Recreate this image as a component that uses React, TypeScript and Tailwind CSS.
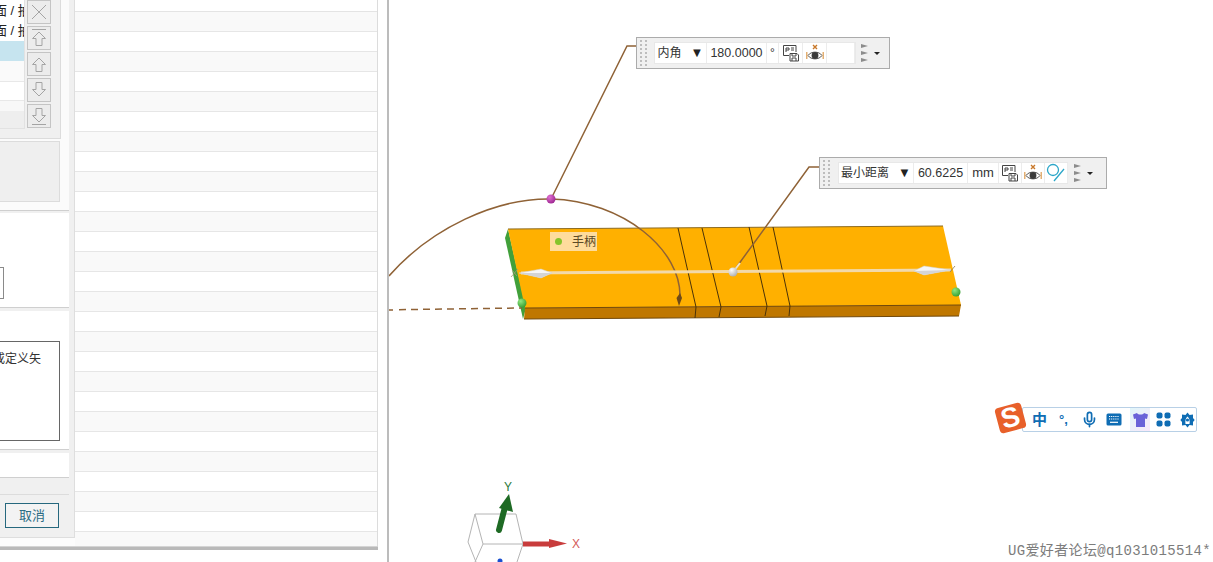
import { Mic } from "lucide-react";

const rows = Array.from({ length: 27 }, (_, i) => i);

function ArrowButton({ dir, bar }: { dir: "up" | "down"; bar?: boolean }) {
  return (
    <button className="w-[24px] h-[24px] border border-[#c4c4c4] bg-[#ececec] flex items-center justify-center">
      <svg width="18" height="20" viewBox="0 0 18 20" fill="none" stroke="#a4a4a4" strokeWidth="1">
        {dir === "up" ? (
          <>
            {bar && <path d="M2 1.5H16" />}
            <path d="M9 4L15.5 10.5H12V17.5H6V10.5H2.5Z" />
          </>
        ) : (
          <>
            <path d="M6 2.5H12V9.5H15.5L9 16L2.5 9.5H6Z" />
            {bar && <path d="M2 18.5H16" />}
          </>
        )}
      </svg>
    </button>
  );
}

function Grip() {
  return (
    <div className="w-[7px] grid grid-cols-2 gap-x-[2px] gap-y-[2px] ml-[3px]">
      {Array.from({ length: 14 }, (_, i) => (
        <span key={i} className="w-[2px] h-[2px] bg-[#bdbdbd]" />
      ))}
    </div>
  );
}

function PinIcon() {
  return (
    <svg width="18" height="18" viewBox="0 0 18 18" fill="none" stroke="#444" strokeWidth="1">
      <path d="M1.5 1.5H14V8M1.5 1.5V11.5H7" />
      <path d="M4 8V4H7V6H4M9 4H12M9 6H12" />
      <path d="M8 9.5H15L16.5 11V17H8Z" />
      <path d="M10 9.5V12H14V9.5M10 17V14H14V17" />
    </svg>
  );
}

function EyeIcon() {
  return (
    <svg width="18" height="18" viewBox="0 0 18 18" fill="none">
      <path d="M7 1L11 5M11 1L7 5" stroke="#c8782a" strokeWidth="1.4" />
      <path d="M2 11.5C5 7 13 7 16 11.5C13 16 5 16 2 11.5Z" stroke="#555" strokeWidth="1" />
      <circle cx="9" cy="11.5" r="3.4" fill="#3a3a3a" />
      <path d="M0.8 8V15M17.2 8V15" stroke="#dc9c50" strokeWidth="1.2" />
    </svg>
  );
}

function CircleSlashIcon() {
  return (
    <svg width="20" height="20" viewBox="0 0 20 20" fill="none" stroke="#2ba6c8" strokeWidth="1.3">
      <circle cx="7" cy="7" r="5.5" />
      <path d="M18 6L8 18" />
    </svg>
  );
}

function MoreArrows() {
  return (
    <div className="flex items-center gap-[5px]">
      <svg width="8" height="18" viewBox="0 0 8 18" fill="#8c8c8c">
        <path d="M0 0L7 2L0 4Z" />
        <path d="M0 7L7 9L0 11Z" />
        <path d="M0 14L7 16L0 18Z" />
      </svg>
      <span className="w-0 h-0 border-x-[3px] border-x-transparent border-t-[3px] border-t-[#222]" />
    </div>
  );
}

function Cell({ w, children }: { w: string; children?: React.ReactNode }) {
  return (
    <div className={`${w} h-full shrink-0 border-r border-[#ececec] flex items-center justify-center text-[12px] text-[#333] whitespace-nowrap`}>
      {children}
    </div>
  );
}

function ShirtIcon() {
  return (
    <svg width="17" height="16" viewBox="0 0 17 16">
      <path d="M5 1L1 2.5L2 7L4 6.5V15H13V6.5L15 7L16 2.5L12 1C11 3 6 3 5 1Z" fill="#6a62d8" />
    </svg>
  );
}

function SquaresIcon() {
  return (
    <svg width="15" height="15" viewBox="0 0 15 15" fill="#0f6db4">
      <rect x="0.5" y="0.5" width="6" height="6" rx="2" />
      <rect x="8.5" y="0.5" width="6" height="6" rx="2" />
      <rect x="0.5" y="8.5" width="6" height="6" rx="2" />
      <rect x="8.5" y="8.5" width="6" height="6" rx="2" />
    </svg>
  );
}

function KeyboardIcon() {
  return (
    <svg width="16" height="13" viewBox="0 0 16 13">
      <rect x="0.5" y="0.5" width="15" height="12" rx="1.5" fill="#0f6db4" />
      <path d="M3 3.5H13M3 6H13" stroke="#fff" strokeWidth="1.2" strokeDasharray="1.2 0.9" />
      <path d="M4 9.3H12" stroke="#fff" strokeWidth="1.2" />
    </svg>
  );
}

function GearIcon() {
  return (
    <svg width="15" height="16" viewBox="0 0 15 16">
      <path d="M7.5 0.5L9.5 3L13 2.5L13 6L14.7 8L13 10L13 13.5L9.5 13L7.5 15.5L5.5 13L2 13.5L2 10L0.3 8L2 6L2 2.5L5.5 3Z" fill="#0f6db4" />
      <path d="M7.5 4.5C5.5 6 5 9 5.5 12H9.5C10 9 9.5 6 7.5 4.5Z" fill="#fff" />
      <circle cx="7.5" cy="8" r="1.6" fill="#0f6db4" />
    </svg>
  );
}

function Model() {
  return (
    <svg className="absolute inset-0" width="825" height="562" viewBox="388 0 825 562" fill="none">
      <defs>
        <radialGradient id="ballPink" cx="0.35" cy="0.3" r="0.8">
          <stop offset="0" stopColor="#e070d0" />
          <stop offset="1" stopColor="#98208c" />
        </radialGradient>
        <radialGradient id="ballWhite" cx="0.35" cy="0.3" r="0.8">
          <stop offset="0" stopColor="#ffffff" />
          <stop offset="1" stopColor="#a8a8a8" />
        </radialGradient>
        <radialGradient id="ballGreen" cx="0.35" cy="0.3" r="0.8">
          <stop offset="0" stopColor="#90e880" />
          <stop offset="1" stopColor="#30982c" />
        </radialGradient>
      </defs>

      {/* part */}
      <path d="M507 229L504 238L522 319L525 308Z" fill="#41a03a" />
      <path d="M507 229L942 226L960 305L524 308Z" fill="#ffb000" />
      <path d="M524 308L960 305L958 316L523 319Z" fill="#bf7700" />
      <path d="M507 229L942 226" stroke="#8c6a20" strokeWidth="1" />
      <path d="M524 308L960 305M523 319L958 316" stroke="#70480a" strokeWidth="1" />
      <path d="M677 228L695 307L694 318M701 228L720 307L718 317M748 227L766 306L764 316M772 227L789 306L788 316" stroke="#4a3208" strokeWidth="1" />

      {/* angle arc and dashed reference */}
      <path d="M388 276C430 228 495 198 550 199C622 201 681 250 679 298" stroke="#8f6236" strokeWidth="1.5" />
      <path d="M388 310H392M398 309.7L521 308" stroke="#8f6236" strokeWidth="1.5" strokeDasharray="7 5" />
      <path d="M678 306L675.5 298L679 293L681 298Z" fill="#6e4a18" />

      {/* axis */}
      <path d="M520 273L950 270" stroke="#f2d9aa" strokeWidth="3" />
      <path d="M518 273L540 269L551 273L540 278Z" fill="#f6f6f6" stroke="#cfcfcf" strokeWidth="0.5" />
      <path d="M518 273L551 273L540 278Z" fill="#d4d4d4" />
      <path d="M913 271L923 266L950 270L923 275Z" fill="#f6f6f6" stroke="#cfcfcf" strokeWidth="0.5" />
      <path d="M913 271L950 270L923 275Z" fill="#d4d4d4" />
      <path d="M510 277L517 269M511 270L516 276" stroke="#a89878" strokeWidth="0.8" />
      <path d="M949 272L954 266" stroke="#8a7a50" strokeWidth="0.8" />

      {/* leaders */}
      <path d="M732 272L808 167H819" stroke="#8f6236" strokeWidth="1.5" />
      <path d="M732 272L739 263" stroke="#f2e4c8" strokeWidth="2" />
      <path d="M550 199L626 46H637" stroke="#8f6236" strokeWidth="1.5" />

      {/* handles */}
      <circle cx="550" cy="199" r="4.5" fill="url(#ballPink)" />
      <circle cx="732" cy="272" r="4.5" fill="url(#ballWhite)" />
      <circle cx="521" cy="303" r="4.5" fill="url(#ballGreen)" />
      <circle cx="955" cy="292" r="4.5" fill="url(#ballGreen)" />

      {/* triad */}
      <path d="M474 514H515L522 544H482L474 514L467 542L475 562M482 544L474 562M522 544L516 562" stroke="#b4b4b4" strokeWidth="1" />
      <path d="M498 530L504 507" stroke="#1e6a24" strokeWidth="6" strokeLinecap="round" />
      <path d="M508 494L512 512L498 508Z" fill="#1e6a24" />
      <path d="M522 544H550" stroke="#c83c3c" strokeWidth="5" />
      <path d="M566 543.5L548 539V548Z" fill="#c83c3c" />
      <circle cx="499" cy="561" r="2.5" fill="#1a50d0" />
    </svg>
  );
}

export default function App() {
  return (
    <div className="w-[1213px] h-[562px] flex overflow-hidden bg-white font-['Liberation_Sans','Noto_Sans_CJK_SC',sans-serif]">
      {/* left pane */}
      <div className="w-[389px] h-full shrink-0 border-r-2 border-[#bcbcbc] flex flex-col">
        <div className="h-[546px] w-[378px] flex shrink-0 overflow-hidden border-r border-[#dcdcdc]">
          {/* dialog */}
          <div className="w-[75px] h-full shrink-0 bg-[#fcfcfc]">
            <div className="h-[538px] bg-[#f0f0f0] border-b border-r border-[#dedede] flex flex-col">
              <div className="w-[69px] h-[211px] bg-[#fbfbfb] border-b border-[#cfcfcf] shrink-0">
                <div className="w-[61px] h-[139px] bg-[#f0f0f0] border-r border-b border-[#dcdcdc] flex gap-[2px]">
                  <div className="w-[25px] h-[129px] bg-white border-r border-b border-[#e2e2e2] flex flex-col overflow-hidden text-[13px] text-[#222]">
                    <div className="h-[21px] leading-[21px] whitespace-nowrap -ml-[6px]">面 / 抽</div>
                    <div className="h-[20px] leading-[20px] whitespace-nowrap -ml-[6px]">面 / 抽</div>
                    <div className="h-[20px] bg-[#c6e4ef]" />
                    <div className="h-[21px] bg-[#fafafa] border-b border-[#e8e8e8]" />
                    <div className="h-[20px] bg-white border-b border-[#e8e8e8]" />
                    <div className="h-[10px] bg-[#f8f8f8]" />
                    <div className="h-[17px] bg-[#eeeeee]" />
                  </div>
                  <div className="flex flex-col gap-[2px]">
                    <button className="w-[24px] h-[24px] border border-[#c4c4c4] bg-[#ececec] flex items-center justify-center">
                      <svg width="18" height="18" viewBox="0 0 18 18" stroke="#a4a4a4" strokeWidth="1">
                        <path d="M2 2L16 16M16 2L2 16" />
                      </svg>
                    </button>
                    <ArrowButton dir="up" bar />
                    <ArrowButton dir="up" />
                    <ArrowButton dir="down" />
                    <ArrowButton dir="down" bar />
                  </div>
                </div>
                <div className="w-[60px] h-[61px] mt-[2px] bg-[#efefef] border-t border-r border-b border-[#dcdcdc]" />
              </div>

              <div className="w-[69px] h-[95px] mt-[2px] bg-white border-b border-[#cfcfcf] shrink-0">
                <div className="w-[4px] h-[32px] mt-[54px] border-r border-y border-[#8a8a8a]" />
              </div>

              <div className="w-[69px] h-[139px] mt-[3px] bg-white border-b border-[#cfcfcf] shrink-0 pt-[30px]">
                <div className="w-[60px] h-[100px] border-r border-y border-[#666] overflow-hidden flex justify-end">
                  <span className="text-[12px] leading-[14px] mt-[10px] mr-[18px] text-[#333] whitespace-nowrap">或定义矢</span>
                </div>
              </div>

              <div className="w-[69px] h-[25px] mt-[3px] bg-white border-b border-[#cfcfcf] shrink-0" />

              <div className="w-[69px] mt-[16px] border-t border-[#dcdcdc] pt-[8px] pl-[5px]">
                <button className="w-[54px] h-[25px] border border-[#26687e] bg-[#f3f3f3] text-[13px] text-[#2b6c84] flex items-center justify-center">
                  取消
                </button>
              </div>
            </div>
          </div>

          {/* striped table */}
          <div className="flex-1 h-full flex flex-col">
            <div className="h-[12px] shrink-0 border-b border-[#e4e4e4]" />
            {rows.map((r) => (
              <div key={r} className={`h-[20px] shrink-0 border-b border-[#e6e6e6] ${r % 2 === 0 ? "bg-[#f9f9f9]" : "bg-white"}`} />
            ))}
          </div>
        </div>
        <div className="w-[378px] h-[4px] shrink-0 bg-[#b9b9b9] border-t border-[#d4d4d4]" />
      </div>

      {/* graphics window */}
      <div className="relative flex-1 h-full overflow-hidden">
        <Model />

        <div className="absolute left-[161px] top-[232px] w-[47px] h-[19px] bg-[#fedc9c] flex items-center text-[12px] text-[#5c4a26]">
          <span className="w-[7px] h-[7px] ml-[5px] rounded-full bg-[#86c42a]" />
          <span className="ml-[10px] whitespace-nowrap">手柄</span>
        </div>

        {/* angle toolbar */}
        <div className="absolute left-[247px] top-[37px] w-[254px] h-[32px] bg-[#f0f0f0] border border-[#ababab] flex items-center">
          <Grip />
          <div className="ml-[7px] w-[202px] h-[22px] bg-white border border-[#e8e8e8] flex items-center">
            <Cell w="w-[52px]">
              <span>内角</span>
              <span className="ml-[9px] text-[13px] text-[#222]">▼</span>
            </Cell>
            <Cell w="w-[60px]"><span className="text-[12.5px]">180.0000</span></Cell>
            <Cell w="w-[12px]">°</Cell>
            <Cell w="w-[24px]"><PinIcon /></Cell>
            <Cell w="w-[24px]"><EyeIcon /></Cell>
            <Cell w="w-[28px]" />
          </div>
          <div className="ml-[5px]"><MoreArrows /></div>
        </div>

        {/* distance toolbar */}
        <div className="absolute left-[430px] top-[157px] w-[288px] h-[32px] bg-[#f0f0f0] border border-[#ababab] flex items-center">
          <Grip />
          <div className="ml-[8px] w-[230px] h-[22px] bg-white border border-[#e8e8e8] flex items-center">
            <Cell w="w-[75px]">
              <span>最小距离</span>
              <span className="ml-[9px] text-[13px] text-[#222]">▼</span>
            </Cell>
            <Cell w="w-[54px]"><span className="text-[12.5px]">60.6225</span></Cell>
            <Cell w="w-[31px]"><span className="text-[13px]">mm</span></Cell>
            <Cell w="w-[23px]"><PinIcon /></Cell>
            <Cell w="w-[23px]"><EyeIcon /></Cell>
            <Cell w="w-[23px]"><CircleSlashIcon /></Cell>
          </div>
          <div className="ml-[6px]"><MoreArrows /></div>
        </div>

        {/* input method bar */}
        <div className="absolute left-[633px] top-[407px] w-[175px] h-[25px] bg-white border border-[#b8d0e6] rounded-[2px] flex items-center pl-[9px] text-[#0f6db4]">
          <span className="w-[16px] text-[15px] font-bold leading-none">中</span>
          <span className="w-[16px] ml-[11px] text-[13px] font-bold leading-none whitespace-nowrap">°,</span>
          <Mic className="ml-[6px]" size={17} strokeWidth={2.4} />
          <span className="ml-[8px]"><KeyboardIcon /></span>
          <span className="ml-[8px] w-[20px] h-[23px] flex items-center justify-center bg-linear-to-br from-[#e0f6fa] to-[#f8e8fa]"><ShirtIcon /></span>
          <span className="ml-[6px]"><SquaresIcon /></span>
          <span className="ml-[9px]"><GearIcon /></span>
        </div>
        <div className="absolute left-[608px] top-[405px] w-[27px] h-[26px] rounded-[4px] bg-[#e8602a] -rotate-[15deg] flex items-center justify-center text-white text-[28px] font-bold leading-none">
          S
        </div>

        {/* triad labels and watermark */}
        <span className="absolute left-[115px] top-[480px] text-[12px] leading-[14px] text-[#2c7a3a]">Y</span>
        <span className="absolute left-[183px] top-[537px] text-[12px] leading-[14px] text-[#d45a5a]">X</span>
        <span className="absolute left-[619px] top-[542px] text-[14px] leading-[18px] tracking-[0.35px] text-[#7c7c7c] whitespace-nowrap font-['Liberation_Mono','Noto_Sans_CJK_SC',monospace]">
          UG爱好者论坛@q1031015514*
        </span>
      </div>
    </div>
  );
}
